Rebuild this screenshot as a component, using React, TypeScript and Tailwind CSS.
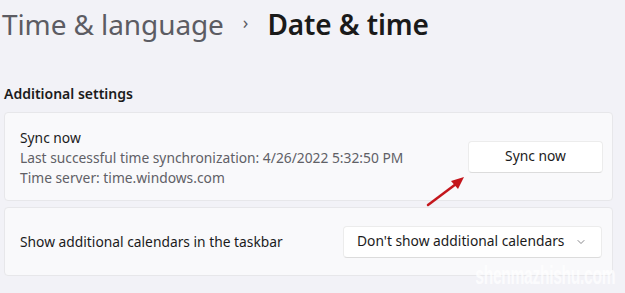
import { ChevronDown } from "lucide-react";

const font = { fontFamily: '"Noto Sans", "Open Sans", sans-serif' };

const RedArrow = () => (
  <svg className="absolute left-[424px] top-[172px]" width="46" height="38" viewBox="0 0 46 38">
    <line x1="4" y1="33" x2="32" y2="12" stroke="#c4161c" strokeWidth="2.5" strokeLinecap="round" />
    <polygon points="40,5 27,9 34,17" fill="#c4161c" />
  </svg>
);

export default function App() {
  return (
    <div className="relative w-[625px] h-[293px] overflow-hidden bg-[#f2f2f7] text-[#1b1b1b]" style={font}>
      <div className="flex items-center pl-[2px] pt-[4px] h-[44px]">
        <span className="text-[28px] tracking-[-0.1px] text-[#5c5c63]">Time &amp; language</span>
        <span className="ml-[19px] mr-[19px] text-[18px] text-[#5c5c63] -mt-[4px]">›</span>
        <span className="text-[28px] font-semibold tracking-[-0.1px] text-[#1a1a1a]">Date &amp; time</span>
      </div>

      <div className="pl-[4px] pr-[12px] mt-[40px]">
        <h2 className="text-[14px] font-semibold leading-[20px] mb-[8px]">Additional settings</h2>

        <div className="flex items-center justify-between h-[89px] rounded-[4px] border border-[#e7e7ea] bg-[#f9f9fb] pl-[15px] pr-[9px]">
          <div className="text-[13.8px] leading-[20px] pt-[3px]">
            <div>Sync now</div>
            <div className="text-[#606066]">Last successful time synchronization: 4/26/2022 5:32:50 PM</div>
            <div className="text-[#606066]">Time server: time.windows.com</div>
          </div>
          <button className="w-[135px] h-[32px] rounded-[4px] bg-white border border-[#ececec] border-b-[#dcdcdc] text-[13.8px]">
            Sync now
          </button>
        </div>

        <div className="flex items-center justify-between h-[69px] mt-[6px] rounded-[4px] border border-[#e7e7ea] bg-[#f9f9fb] pl-[15px] pr-[10px]">
          <span className="text-[13.8px] pt-[2px]">Show additional calendars in the taskbar</span>
          <div className="flex items-center justify-between w-[259px] h-[32px] rounded-[4px] bg-white border border-[#ececec] border-b-[#dcdcdc] pl-[13px] pr-[14px]">
            <span className="text-[13.8px]">Don't show additional calendars</span>
            <ChevronDown size={12} strokeWidth={1.5} className="text-[#606066]" />
          </div>
        </div>
      </div>

      <RedArrow />

      <div
        className="absolute right-[10px] top-[256px] text-[26px] font-bold tracking-[-0.5px] text-white/75 origin-right scale-x-[0.6]"
        style={{ fontFamily: '"Liberation Sans Narrow", "Liberation Sans", sans-serif' }}
      >
        shenmazhishu.com
      </div>
    </div>
  );
}
